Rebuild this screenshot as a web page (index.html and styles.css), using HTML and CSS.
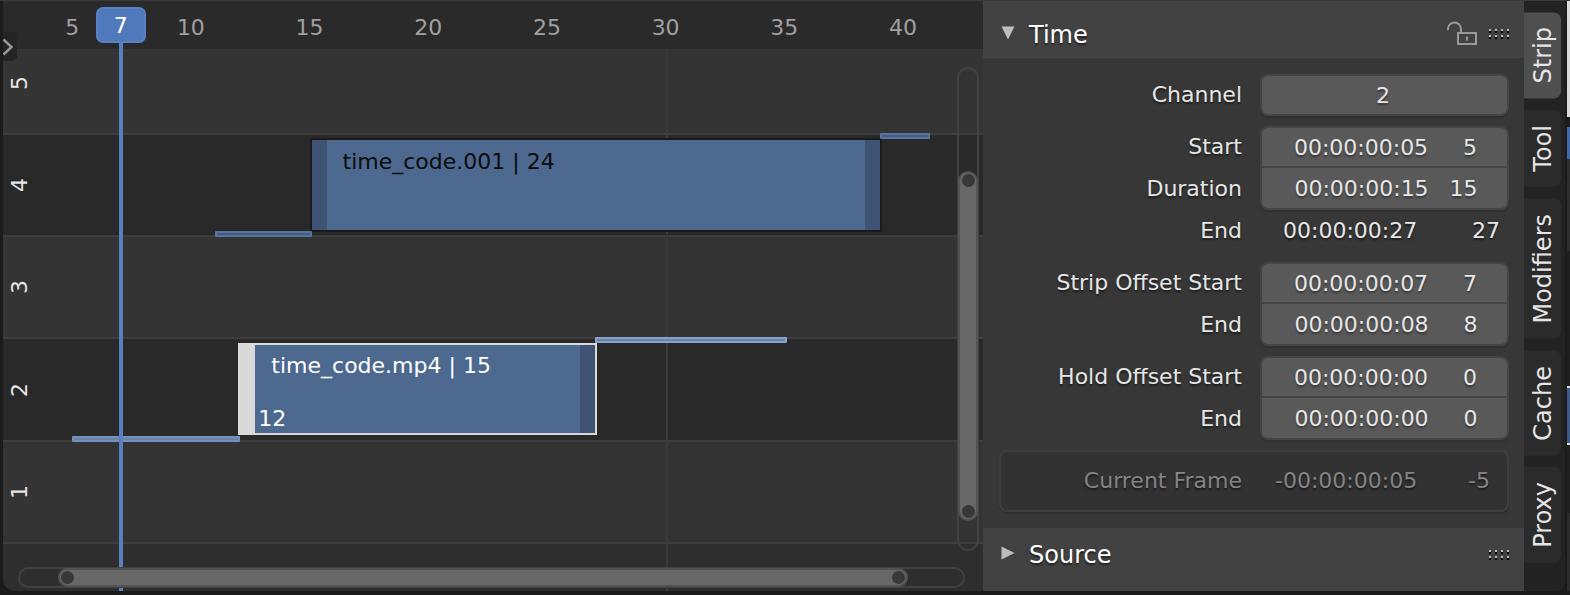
FILE: index.html
```html
<!DOCTYPE html>
<html lang="en">
<head>
<meta charset="utf-8">
<title>Video Sequencer</title>
<link rel="stylesheet" href="styles.css">
</head>
<body>
<div class="workspace">
  <main class="timeline">
    <div class="ruler">
      <span class="tick" style="--f:5">5</span>
      <span class="tick" style="--f:10">10</span>
      <span class="tick" style="--f:15">15</span>
      <span class="tick" style="--f:20">20</span>
      <span class="tick" style="--f:25">25</span>
      <span class="tick" style="--f:30">30</span>
      <span class="tick" style="--f:35">35</span>
      <span class="tick" style="--f:40">40</span>
    </div>
    <section class="lane lane-top"><span class="lane-name">5</span></section>
    <section class="lane lane-dark">
      <span class="lane-name">4</span>
      <div class="offset offset-start" style="--f:11;--d:4"></div>
      <div class="strip" style="--f:15;--d:24"><span class="strip-title">time_code.001 | 24</span></div>
      <div class="offset offset-end" style="--f:39;--d:2"></div>
    </section>
    <section class="lane"><span class="lane-name">3</span></section>
    <section class="lane lane-dark">
      <span class="lane-name">2</span>
      <div class="offset offset-start offset-active" style="--f:5;--d:7"></div>
      <div class="strip strip-active" style="--f:12;--d:15">
        <span class="strip-title">time_code.mp4 | 15</span>
        <span class="strip-frame">12</span>
      </div>
      <div class="offset offset-end offset-active" style="--f:27;--d:8"></div>
    </section>
    <section class="lane"><span class="lane-name">1</span></section>
    <section class="lane-rest"></section>

    <div class="gridline" style="--f:30"></div>
    <div class="playhead" style="--f:7"><span class="playhead-frame">7</span></div>
    <button class="expand" type="button" aria-label="Show toolbar">
      <svg width="12" height="20" viewBox="0 0 12 20"><path d="M0.5 2.5 L8.5 10 L0.5 17.5" fill="none" stroke="#999" stroke-width="2.4"/></svg>
    </button>
    <div class="scroll scroll-v"><div class="thumb thumb-v"><i class="knob"></i><i class="knob"></i></div></div>
    <div class="scroll scroll-h"><div class="thumb thumb-h"><i class="knob"></i><i class="knob"></i></div></div>
  </main>

  <aside class="panel">
    <header class="panel-head">
      <button class="panel-toggle" type="button" aria-expanded="true">
        <svg width="14" height="14" viewBox="0 0 14 14"><path d="M0.5 0.5 H13.5 L7 13.5 Z" fill="#bdbdbd"/></svg>
        <span>Time</span>
      </button>
      <button class="icon-button" type="button" aria-label="Lock">
        <svg width="30" height="24" viewBox="0 0 30 24" fill="none" stroke="#999" stroke-width="2">
          <path d="M1 9 V8 A6.5 6.5 0 0 1 14 8 V12"/>
          <rect x="11" y="12" width="18" height="11"/>
          <path d="M20 15.500 V19.500"/>
        </svg>
      </button>
      <svg class="grip" width="20" height="10" viewBox="0 0 20 10" shape-rendering="crispEdges"><path d="M0 1H20M0 7H20" stroke="#bdbdbd" stroke-width="2" stroke-dasharray="2 4"/><path d="M0 3H20M0 9H20" stroke="#000" stroke-width="2" stroke-dasharray="2 4"/></svg>
    </header>
    <form class="panel-body">
      <div class="group">
        <label class="label" for="channel">Channel</label>
        <input class="field field-single" id="channel" type="text" value="2">
      </div>
      <div class="group">
        <label class="label" for="start">Start</label>
        <input class="field field-first" id="start" type="text" value="00:00:00:05     5">
        <label class="label" for="duration">Duration</label>
        <input class="field field-last" id="duration" type="text" value="00:00:00:15   15">
        <label class="label" for="end">End</label>
        <output class="readout" id="end"><span>00:00:00:27</span><span>27</span></output>
      </div>
      <div class="group">
        <label class="label" for="offset-start">Strip Offset Start</label>
        <input class="field field-first" id="offset-start" type="text" value="00:00:00:07     7">
        <label class="label" for="offset-end">End</label>
        <input class="field field-last" id="offset-end" type="text" value="00:00:00:08     8">
      </div>
      <div class="group">
        <label class="label" for="hold-start">Hold Offset Start</label>
        <input class="field field-first" id="hold-start" type="text" value="00:00:00:00     0">
        <label class="label" for="hold-end">End</label>
        <input class="field field-last" id="hold-end" type="text" value="00:00:00:00     0">
      </div>
      <div class="group current">
        <label class="label" for="current">Current Frame</label>
        <output class="readout readout-current" id="current"><span>-00:00:00:05</span><span>-5</span></output>
      </div>
    </form>
    <header class="panel-head panel-head-last">
      <button class="panel-toggle" type="button" aria-expanded="false">
        <svg width="14" height="14" viewBox="0 0 14 14"><path d="M0.500 0.500 V13.500 L13.500 7 Z" fill="#bdbdbd"/></svg>
        <span>Source</span>
      </button>
      <svg class="grip" width="20" height="10" viewBox="0 0 20 10" shape-rendering="crispEdges"><path d="M0 1H20M0 7H20" stroke="#bdbdbd" stroke-width="2" stroke-dasharray="2 4"/><path d="M0 3H20M0 9H20" stroke="#000" stroke-width="2" stroke-dasharray="2 4"/></svg>
    </header>
  </aside>

  <nav class="tabs">
    <button class="tab tab-active" type="button">Strip</button>
    <button class="tab" type="button">Tool</button>
    <button class="tab" type="button">Modifiers</button>
    <button class="tab" type="button">Cache</button>
    <button class="tab" type="button">Proxy</button>
  </nav>
  <div class="neighbor"></div>
</div>
</body>
</html>
```
FILE: styles.css
```css
* {
  box-sizing: border-box;
}

body {
  margin: 0;
  background: #1c1b1c;
  color: #e6e6e6;
  font-family: "DejaVu Sans", sans-serif;
  font-size: 22px;
  line-height: 28px;
}

button,
input {
  margin: 0;
  border: 0;
  padding: 0;
  background: none;
  color: inherit;
  font: inherit;
}

svg {
  display: block;
  flex: none;
}

.workspace {
  display: flex;
  min-height: 100vh;
  border-top: 1px solid #3a3a3a;
  padding: 0 0 4px 3px;
}

/* Timeline: --f is a frame number, --d a duration in frames */
.timeline {
  --first: 2.085;
  --frame: calc(100% / 41.285);
  position: relative;
  flex: 1;
  min-width: 0;
  display: grid;
  grid-template-rows: 48px 86fr 102fr 102fr 103fr 102fr 47fr;
  border-bottom-left-radius: 12px;
  overflow: hidden;
  background: #2e2e2e;
}

.tick,
.strip,
.offset,
.gridline,
.playhead {
  position: absolute;
  left: calc((var(--f) - var(--first)) * var(--frame));
}

.ruler {
  position: relative;
  background: #2a2a2a;
  color: #a0a0a0;
}

.tick {
  top: 13px;
  transform: translateX(-50%);
}

.lane {
  position: relative;
  display: flex;
  align-items: center;
  border-bottom: 2px solid #3e3e3e;
  background: #343434;
}

.lane-top {
  padding-bottom: 16px;
}

.lane-dark {
  background: #292929;
}

.lane-name {
  width: 34px;
  writing-mode: vertical-rl;
  transform: rotate(180deg);
  line-height: 34px;
  text-align: center;
}

.strip {
  top: 3px;
  bottom: 3px;
  z-index: 1;
  width: calc(var(--d) * var(--frame) + 3px);
  border: 2px solid #1a1a1a;
  border-radius: 2px;
  background: linear-gradient(#3f5474, #3f5474) left / 15px 100% no-repeat,
    linear-gradient(#3f5474, #3f5474) right / 15px 100% no-repeat,
    #4d6990;
  display: flex;
  flex-direction: column;
  justify-content: space-between;
  padding: 8px 0 0 31px;
  color: #0c0c0c;
  white-space: nowrap;
}

.strip-active {
  top: 4px;
  bottom: 5px;
  padding-top: 7px;
  border-color: #d9d9d9;
  border-radius: 0;
  background: linear-gradient(#d9d9d9, #d9d9d9) left / 15px 100% no-repeat,
    linear-gradient(#3f5474, #3f5474) right / 15px 100% no-repeat,
    #4d6990;
  color: #fff;
}

.strip-frame {
  margin-left: -13px;
}

.offset {
  z-index: 2;
  width: calc(var(--d) * var(--frame) + 2px);
  height: 6px;
  border: 2px solid #56749f;
  border-radius: 1px;
  background: #455a7d;
}

.offset-start {
  bottom: -2px;
}

.offset-end {
  top: -2px;
  margin-left: 1px;
}

.offset-active {
  border-color: #87a3cd;
  background: #6b83a8;
}

.offset-start.offset-active {
  border-color: #7391bd;
}

.gridline {
  top: 48px;
  bottom: 0;
  width: 2px;
  background: #3a3a3a;
}

.playhead {
  top: 40px;
  bottom: 0;
  z-index: 3;
  width: 4px;
  margin-left: -1px;
  background: #587fc1;
}

.playhead-frame {
  position: absolute;
  top: -34px;
  left: -23px;
  width: 50px;
  height: 36px;
  border: 2px solid #5882c6;
  border-radius: 7px;
  background: #5079bc;
  color: #fff;
  line-height: 34px;
  text-align: center;
}

.expand {
  position: absolute;
  top: 31px;
  left: 0;
  z-index: 4;
  width: 14px;
  height: 29px;
  display: flex;
  align-items: center;
  border-radius: 0 5px 5px 0;
  background: #242424;
}

.scroll {
  position: absolute;
  z-index: 4;
  border: 2px solid #414141;
  border-radius: 11px;
}

.scroll-v {
  top: 66px;
  bottom: 40px;
  right: 4px;
  width: 22px;
}

.scroll-h {
  left: 15px;
  right: 18px;
  bottom: 3px;
  height: 21px;
  background: #2e2e2e;
}

.thumb {
  position: absolute;
  display: flex;
  justify-content: space-between;
  align-items: center;
  border: 2px solid #535353;
  border-radius: 11px;
  background: #676767;
}

.thumb-v {
  top: 21.300%;
  bottom: 5.900%;
  left: -1px;
  right: -1px;
  flex-direction: column;
  padding: 1px 0;
}

.thumb-h {
  top: -1px;
  bottom: -1px;
  left: 4%;
  right: 5.800%;
  padding: 0 1px;
}

.knob {
  width: 13px;
  height: 13px;
  border-radius: 50%;
  background: #383838;
}

/* Sidebar panels */
.panel {
  flex: none;
  width: 541px;
  display: flex;
  flex-direction: column;
  background: #373737;
  text-shadow: 0 2px 2px rgba(0, 0, 0, 0.5);
}

.panel-head {
  display: flex;
  align-items: center;
  gap: 12px;
  min-height: 57px;
  padding: 0 15px 0 18px;
  background: #424242;
}

.panel-head-last {
  flex: 1;
  padding-bottom: 10px;
}

.panel-toggle {
  flex: 1;
  display: flex;
  align-items: center;
  gap: 14px;
  padding-top: 10px;
  color: #fff;
  font-size: 24px;
  text-shadow: inherit;
}

.panel-toggle svg {
  margin-bottom: 4px;
}

.panel-head-last .panel-toggle {
  padding-top: 0;
}

.grip {
  margin-top: 8px;
}

.panel-head-last .grip {
  margin-top: 0;
}

.icon-button {
  margin-top: 6px;
}

.panel-body {
  display: flex;
  flex-direction: column;
  gap: 10px;
  padding: 16px 15px 16px 16px;
}

.group {
  display: grid;
  grid-template-columns: 243fr 249fr;
  grid-auto-rows: 42px;
  column-gap: 18px;
  align-items: center;
}

.label {
  text-align: right;
}

.field {
  width: 100%;
  height: 42px;
  border: 2px solid #444;
  background: #595959;
  box-shadow: 0 2px 1px #303030;
  text-align: center;
  text-shadow: 0 2px 2px rgba(0, 0, 0, 0.4);
}

.field-single {
  border-radius: 8px;
  padding-right: 3px;
}

.field-first {
  border-radius: 8px 8px 0 0;
  padding-left: 2px;
  box-shadow: none;
}

.field-last {
  border-top: 0;
  border-radius: 0 0 8px 8px;
  padding-left: 3px;
}

.readout {
  display: flex;
  justify-content: space-between;
  padding: 0 9px 0 23px;
}

.current {
  grid-auto-rows: 58px;
  border: 2px solid #3e3e3e;
  border-radius: 8px;
  background: #323232;
  box-shadow: 0 2px 1px #2f2f2f;
  color: #848484;
}

.readout-current {
  padding: 0 17px 0 15px;
}

/* Category tabs */
.tabs {
  flex: none;
  width: 41px;
  display: flex;
  flex-direction: column;
  align-items: flex-start;
  gap: 12px;
  padding-top: 11px;
  border-bottom-right-radius: 8px;
  background: #232323;
}

.tab {
  width: 37px;
  padding: 15px 0;
  border-radius: 7px 0 0 7px;
  background: #2b2b2b;
  font-size: 24px;
  line-height: 34px;
  writing-mode: vertical-rl;
  transform: rotate(180deg);
}

.tab-active {
  background: #4f4f4f;
}

/* Sliver of the adjoining editor */
.neighbor {
  flex: none;
  width: 3px;
  margin-left: 2px;
  background: linear-gradient(
    #dadada 0 116px, #1d1d1d 116px 126px, #4068a8 126px 158px,
    #2d2d2d 158px 250px, #1f1f1f 250px 385px, #d9d9d9 385px 387px,
    #3f5a86 387px 442px, #d9d9d9 442px 444px, #202020 444px 512px,
    #2c2c2c 512px);
}
```
